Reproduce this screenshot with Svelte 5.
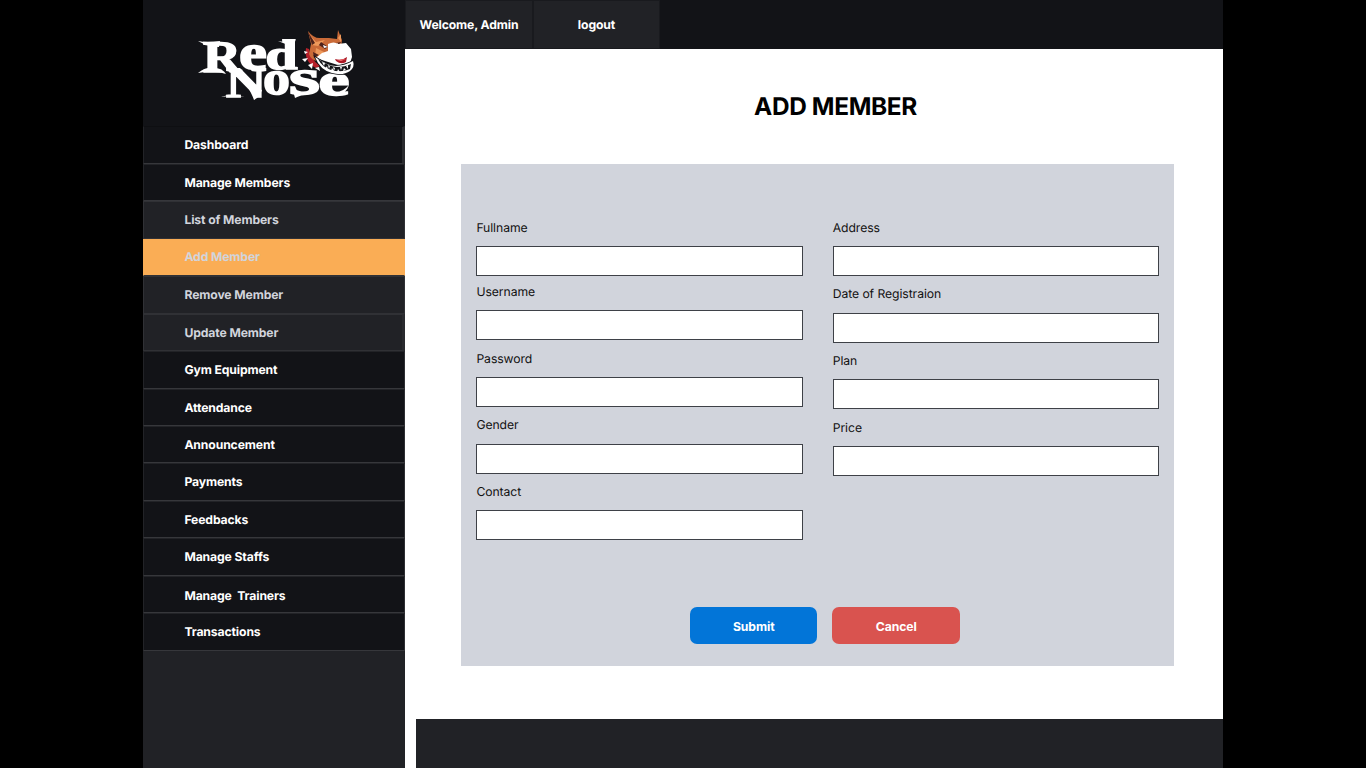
<script>
  const nav = [
    { label: 'Dashboard', inset: true },
    { label: 'Manage Members' },
    { label: 'List of Members', sub: true },
    { label: 'Add Member', sub: true, active: true },
    { label: 'Remove Member', sub: true },
    { label: 'Update Member', sub: true, inset: true },
    { label: 'Gym Equipment' },
    { label: 'Attendance' },
    { label: 'Announcement' },
    { label: 'Payments' },
    { label: 'Feedbacks' },
    { label: 'Manage Staffs' },
    { label: 'Manage\u00a0 Trainers', low: true },
    { label: 'Transactions' }
  ];
  const left = ['Fullname', 'Username', 'Password', 'Gender', 'Contact'];
  const right = ['Address', 'Date of Registraion', 'Plan', 'Price'];
  const letters = [
    { c: 'R', x: 203, y: 71.5, s: 45, w: 38 },
    { c: 'e', x: 239, y: 69, s: 50, w: 28 },
    { c: 'd', x: 265.5, y: 68.5, s: 42, w: 32 },
    { c: 'N', x: 226, y: 97, s: 43, w: 40 },
    { c: 'o', x: 263, y: 93.5, s: 48, w: 27 },
    { c: 's', x: 289, y: 94, s: 50, w: 31 },
    { c: 'e', x: 318.5, y: 94.5, s: 45, w: 31 }
  ];
</script>

<div class="screen">
  <aside>
    <div class="brand">
      <svg width="170" height="84" viewBox="190 22 170 84" aria-label="Red Nose">
        <g class="word">
          {#each letters as l}
            <text x={l.x} y={l.y} font-size={l.s} textLength={l.w} lengthAdjust="spacingAndGlyphs">{l.c}</text>
          {/each}
        </g>
        <g fill="#fff">
          <path d="M198 41Q207 43 220 41L219 47Q208 47 198 41Z" />
          <path d="M198 73Q207 66 216 68Q223 69 226 74Q215 70 198 73Z" />
          <path d="M228 68Q236 71 240 80L240 72L233 64Z" />
          <path d="M221 97Q231 93 245 97Q234 95 221 97Z" />
          <path d="M246 84L262 90Q260 97 254 100Q252 94 246 84Z" />
          <path d="M292 87Q298 94 310 94Q300 95 295 98Z" />
          <path d="M336 92Q343 92 349 85Q346 94 337 96Z" />
          <path d="M278 41Q287 43 296 39L293 47Z" />
        </g>
        <path d="M306 48Q304 62 316 68L320 66Q310 59 309 49Z" fill="#b5202a" />
        <path d="M304 51l4 1-3 2zM302 59l6-1-3 4zM308 65l5-2-1 6zM315 68l4-1 1 4z" fill="#fff" />
        <path d="M309 54L311 44L308 31Q314 39 321 38L329 38L337 39L338 30L342 40L341 48L335 53L325 55L317 61Q311 60 309 54Z" fill="#ca6b38" />
        <path d="M309 34L316 42L325 40L318 46L312 45ZM338 38L341 34L341 42ZM316 48L324 52L319 58L315 56Z" fill="#ee995a" />
        <path d="M308 32L315 43L312 45ZM321 42L328 47L325 49L319 45ZM336 43L341 42L338 47ZM313 52L319 55L314 58Z" fill="#4d221b" />
        <path d="M323 45l5 2-4 1zM334 45l4-2-1 3z" fill="#fff" />
        <path d="M328 44Q334 41 338 44L346 43L351 49L352 57L350 63L341 66L325 61L316 58L322 53L328 51Z" fill="#fff" />
        <path d="M335 59Q342 61 347 57L346 62Q341 65 336 61Z" fill="#aa1825" />
        <path d="M337 60L346 59L341 61Z" fill="#f36c6b" />
        <path d="M315 57Q321 61 327 64Q338 69 353 61Q355 67 350 71Q343 76 332 73Q320 70 315 57Z" fill="#fff" stroke="#121317" stroke-width="1.6" paint-order="stroke" />
        <path d="M318 59Q328 66 337 67Q345 67 351 64L350 69Q341 73 331 70Q322 67 318 59Z" fill="#15161a" />
        <path d="M322 62l3 1-1 3zM328 65l2 1-1 3zM333 67l2 1-1 3zM340 67l2 0-1 3zM346 66l2-1 0 4zM325 69l2-3 1 4zM331 71l1-3 2 3zM337 72l1-3 2 3zM343 71l1-3 2 2z" fill="#fff" />
      </svg>
    </div>
    <nav>
      {#each nav as item}
        <a class:sub={item.sub} class:active={item.active} class:inset={item.inset} class:low={item.low}>{item.label}</a>
      {/each}
    </nav>
  </aside>

  <main>
    <header>
      <div class="tab">Welcome, Admin</div>
      <div class="tab">logout</div>
    </header>
    <h1>ADD MEMBER</h1>
    <form>
      <div class="columns">
        <div class="column first">
          {#each left as name}
            <label><span>{name}</span><input /></label>
          {/each}
        </div>
        <div class="column">
          {#each right as name}
            <label><span>{name}</span><input /></label>
          {/each}
        </div>
      </div>
      <div class="actions">
        <button type="button" class="submit">Submit</button>
        <button type="button" class="cancel">Cancel</button>
      </div>
    </form>
    <footer></footer>
  </main>
</div>

<style>
  :global(body) { background: #000; overflow: hidden; }
  .screen {
    width: 1080px; height: 768px; margin-left: 143px; display: flex;
    font-family: Inter, sans-serif; background: #fff; text-rendering: geometricPrecision;
  }
  aside { width: 262px; background: #212226; flex: none; }
  .brand { height: 126.4px; background: #121317; padding: 22px 0 0 47px; box-sizing: border-box; }
  .brand svg { display: block; }
  .word text {
    font-family: "Liberation Serif", serif; font-weight: 700;
    fill: #fff; stroke: #fff; stroke-width: 1.5;
  }
  nav { display: flex; flex-direction: column; }
  a {
    height: 37.46px; box-sizing: border-box; padding-left: 40.4px; line-height: 35.6px;
    background: #121317; color: #fff; font-size: 12.2px; font-weight: 700; letter-spacing: -0.12px;
    border: 1px solid #222327; border-bottom-color: #36373b; border-right-color: #2e2f33; white-space: nowrap;
  }
  a.sub { background: #212226; color: #d1d4dc; border-color: #303135; }
  a.active { background: #faad55; border-color: #faad55; border-bottom-color: #303135; line-height: 34px; }
  a.inset { border-right: 3px solid #292a2e; }
  a:first-child { border-top-color: #0e0f12; }
  a.low { line-height: 38.5px; }
  main { flex: 1; display: flex; flex-direction: column; }
  header { height: 49px; background: #121317; display: flex; flex: none; }
  .tab {
    width: 127px; box-sizing: border-box; background: #212226; border: 1px solid #191a1e;
    color: #fff; font-size: 12.2px; font-weight: 700; letter-spacing: -0.12px; line-height: 48px; text-align: center;
  }
  .tab:first-child { width: 128px; }
  h1 {
    margin: 42px 0 0 43px; height: 73px; line-height: 31px; font-size: 24.4px; font-weight: 700;
    letter-spacing: -0.35px; text-align: center; color: #000;
  }
  form { margin-left: 56.4px; width: 712.6px; height: 502px; background: #d1d4dc; box-sizing: border-box; padding: 55px 15px 0; flex: none; }
  .columns { display: flex; gap: 30px; height: 387.5px; }
  .column { width: 326.5px; display: flex; flex-direction: column; gap: 9.75px; }
  label { display: block; height: 57px; flex: none; }
  .first label:first-child { margin-bottom: -2.5px; }
  label span { display: block; font-size: 12.2px; letter-spacing: -0.07px; line-height: 16px; color: #111; padding-top: 0.6px; margin-bottom: 10.4px; }
  input { display: block; width: 100%; height: 30px; box-sizing: border-box; border: 1px solid #3e4147; border-radius: 0; background: #fff; padding: 0 8px; }
  .actions { display: flex; justify-content: flex-start; gap: 15px; padding-left: 213.6px; }
  button {
    width: 127.5px; height: 37.5px; border: 0; border-radius: 7px; padding: 3px 0 0; color: #fff;
    font: 700 12.2px Inter, sans-serif; letter-spacing: -0.1px;
  }
  .submit { background: #0275d8; }
  .cancel { background: #d9534f; }
  footer { margin: auto 0 0 11.4px; height: 49px; background: #212226; }
</style>
